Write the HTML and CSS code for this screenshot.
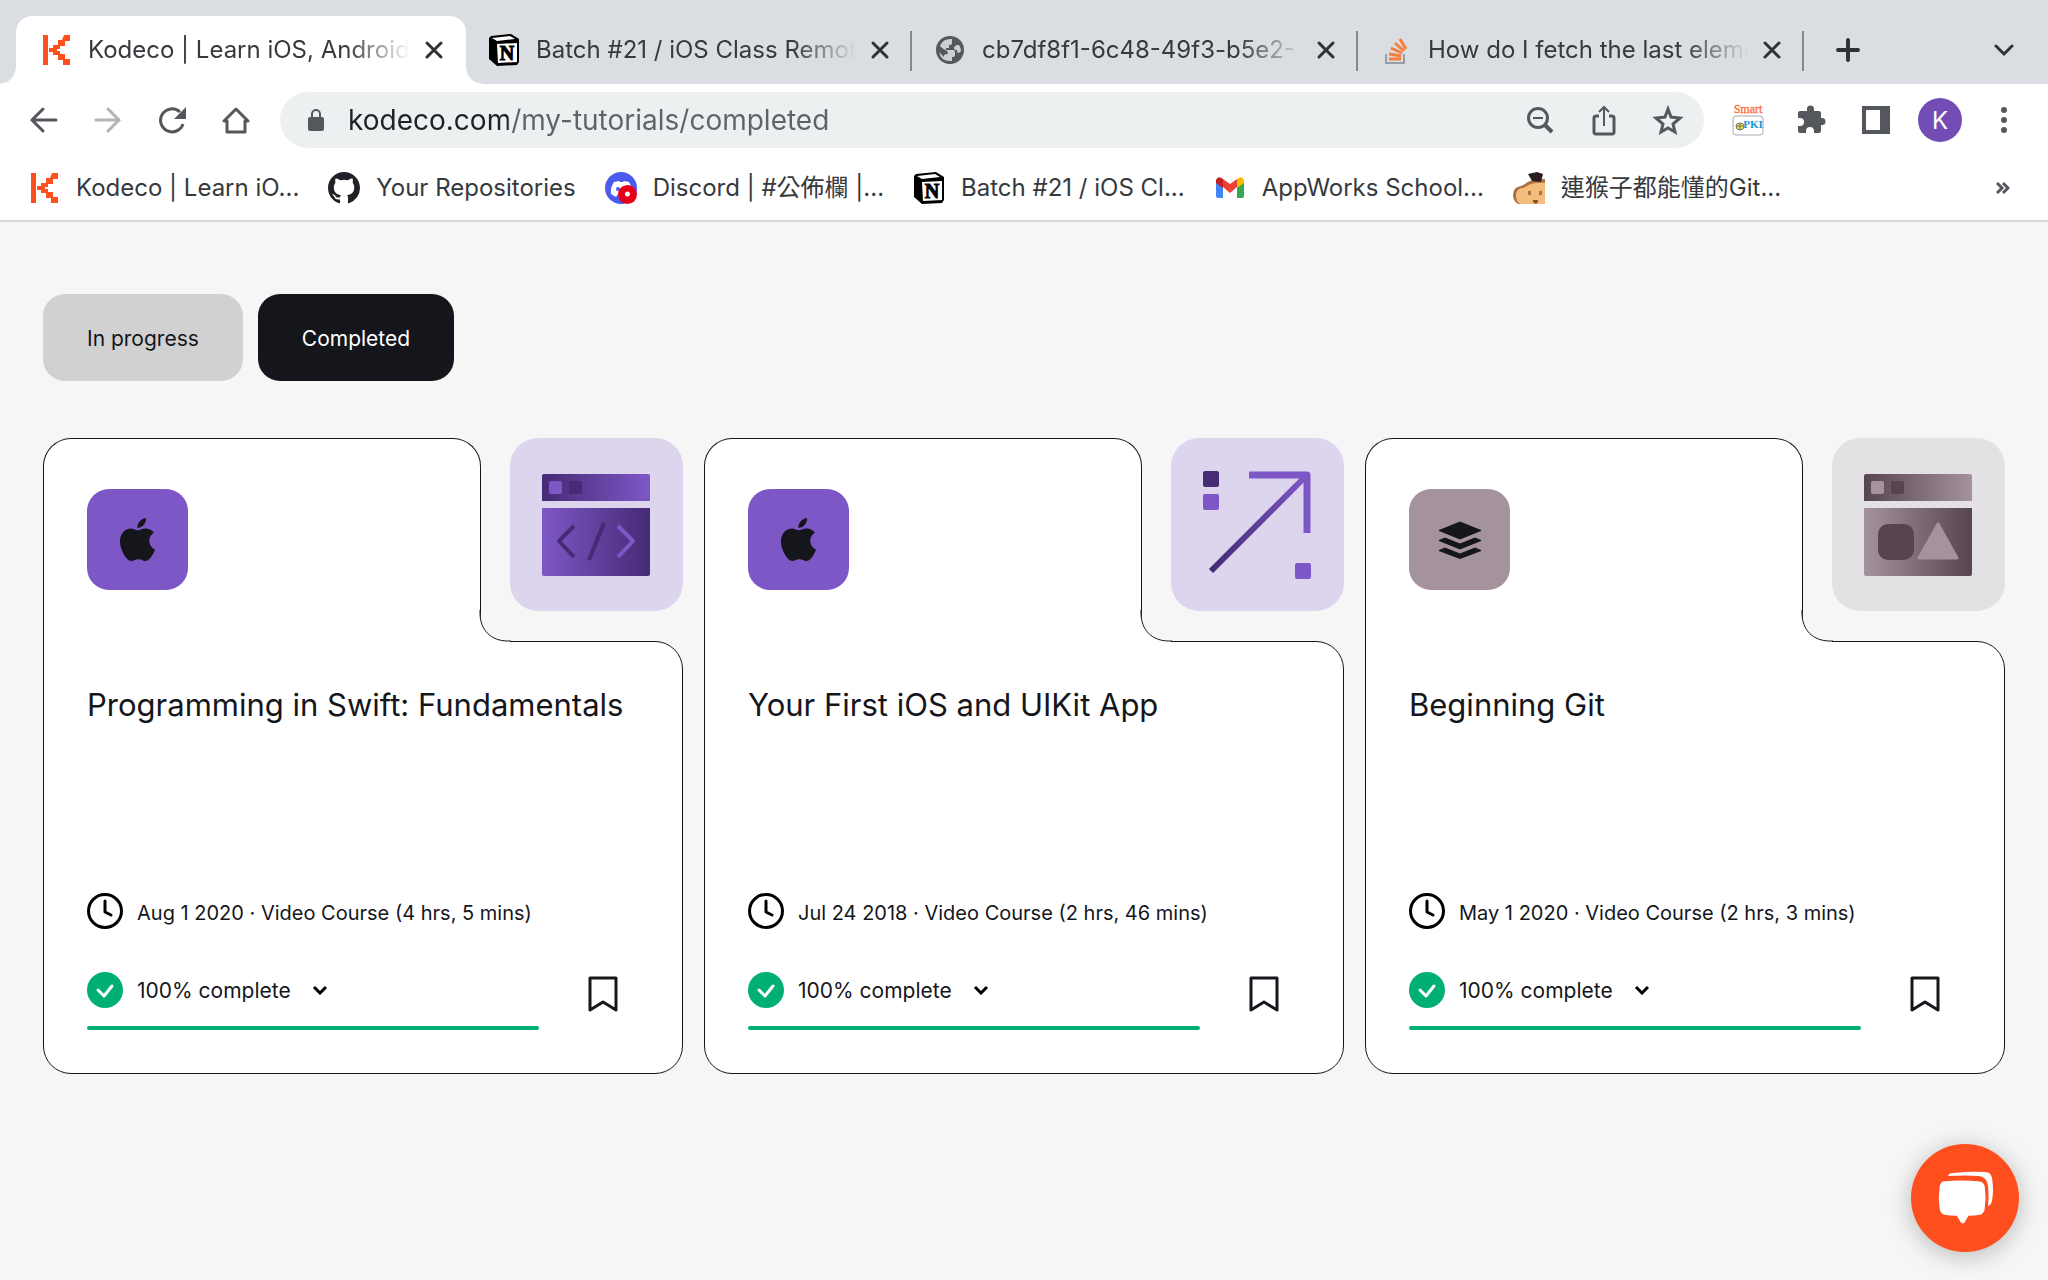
FILE: index.html
```html
<!DOCTYPE html>
<html lang="en">
<head>
<meta charset="utf-8">
<title>Kodeco | Learn iOS, Android</title>
<link rel="stylesheet" href="styles.css">
</head>
<body>
<svg class="defs" aria-hidden="true">
  <defs>
    <linearGradient id="purple-bar"><stop offset="0" stop-color="#452a75"/><stop offset="1" stop-color="#7e57c6"/></linearGradient>
    <linearGradient id="purple-pane"><stop offset="0" stop-color="#7e57c6"/><stop offset="1" stop-color="#452a75"/></linearGradient>
    <linearGradient id="mauve-bar"><stop offset="0" stop-color="#56444f"/><stop offset="1" stop-color="#a4939d"/></linearGradient>
    <linearGradient id="mauve-pane"><stop offset="0" stop-color="#a4939d"/><stop offset="1" stop-color="#56444f"/></linearGradient>
    <linearGradient id="arrow-line" gradientUnits="userSpaceOnUse" x1="40" y1="133" x2="136" y2="37"><stop offset="0" stop-color="#452a75"/><stop offset="1" stop-color="#7e57c6"/></linearGradient>
    <symbol id="kodeco" viewBox="0 0 32 32"><path fill="#ff4f1f" d="M3 1h5v30H3zM24 1h6v6h-5v5h-5v3h-3v2h3v3h5v5h5v6h-7v-5h-5v-5h-5v-3h-4v-4h4v-3h5V6h4z"/></symbol>
    <symbol id="notion" viewBox="0 0 32 32"><path fill="#000" d="M1 4 3 2 23 0l8 5v23l-2 3-20 1-8-7z"/><path fill="#fff" d="M4 4 22 2l5 3L9 7zM9 10l20-1v19L10 29z"/><text x="19" y="26" text-anchor="middle" font-family="Liberation Serif, serif" font-weight="700" font-size="20" stroke="#000" stroke-width="1">N</text></symbol>
    <symbol id="close" viewBox="0 0 20 20"><path fill="none" stroke="#2f3236" stroke-width="3" stroke-linecap="round" d="m3 3 14 14M17 3 3 17"/></symbol>
    <symbol id="apple" viewBox="0 0 24 24"><path fill="#15161b" d="M12.152 6.896c-.948 0-2.415-1.078-3.96-1.04-2.04.027-3.91 1.183-4.961 3.014-2.117 3.675-.546 9.103 1.519 12.09 1.013 1.454 2.208 3.09 3.792 3.039 1.52-.065 2.09-.987 3.935-.987 1.831 0 2.35.987 3.96.948 1.637-.026 2.676-1.48 3.676-2.948 1.156-1.688 1.636-3.325 1.662-3.415-.039-.013-3.182-1.221-3.22-4.857-.026-3.04 2.48-4.494 2.597-4.559-1.429-2.09-3.623-2.324-4.39-2.376-2-.156-3.675 1.09-4.61 1.09zM15.53 3.83c.843-1.012 1.4-2.427 1.245-3.83-1.207.052-2.662.805-3.532 1.818-.78.896-1.454 2.338-1.273 3.714 1.338.104 2.715-.688 3.559-1.701"/></symbol>
    <symbol id="clock" viewBox="0 0 36 36"><circle cx="18" cy="18" r="16.5" fill="none" stroke="#000" stroke-width="3"/><path fill="none" stroke="#000" stroke-width="3" stroke-linecap="round" stroke-linejoin="round" d="M18 8v11l6 3"/></symbol>
    <symbol id="check" viewBox="0 0 36 36"><circle cx="18" cy="18" r="18" fill="#00af76"/><path fill="none" stroke="#fff" stroke-width="3" stroke-linecap="round" stroke-linejoin="round" d="m11 18 6 6 8-10"/></symbol>
    <symbol id="caret" viewBox="0 0 16 10"><path fill="none" stroke="#000" stroke-width="3" d="m2 2 6 6 6-6"/></symbol>
    <symbol id="bookmark" viewBox="0 0 30 36"><path fill="none" stroke="#15161b" stroke-width="3" stroke-linejoin="round" d="M2 2h26v32l-13-8-13 8z"/></symbol>
    <symbol id="notch" viewBox="0 0 32 32"><path fill="#fff" d="M0 0h1c0 20 10 30 30 30v2H0z"/><path fill="none" stroke="#15161b" d="M1 0v3c0 17 11 28 28 28h3"/></symbol>
  </defs>
</svg>

<header class="browser">
  <div class="tabstrip">
    <div class="tab tab-active">
      <svg class="favicon"><use href="#kodeco"/></svg>
      <span class="tab-title">Kodeco | Learn iOS, Android</span>
      <button class="tab-close" aria-label="Close tab"><svg width="20" height="20"><use href="#close"/></svg></button>
    </div>
    <div class="tab">
      <svg class="favicon"><use href="#notion"/></svg>
      <span class="tab-title">Batch #21 / iOS Class Remot</span>
      <button class="tab-close" aria-label="Close tab"><svg width="20" height="20"><use href="#close"/></svg></button>
    </div>
    <div class="tab">
      <svg class="favicon" viewBox="0 0 32 32"><circle cx="16" cy="16" r="14" fill="#54585d"/><path fill="#dadde2" d="M18 5v4q0 2-3 2v3h-3v2h7q2 0 2 2v3q0 2-2 2h-1v4Q7 28 5 18l5 5v-2l3-1q2 0 0-3l-5-3-2-2Q9 4 18 5zM25 11q2 3 2 6l-2 2q-2 0-2-3-3 0-3-2t3-3z" opacity=".9"/></svg>
      <span class="tab-title">cb7df8f1-6c48-49f3-b5e2-</span>
      <button class="tab-close" aria-label="Close tab"><svg width="20" height="20"><use href="#close"/></svg></button>
    </div>
    <div class="tab">
      <svg class="favicon" viewBox="0 0 32 32"><path fill="none" stroke="#9a9da3" stroke-width="2" d="M6 20v9h18v-9"/><path fill="none" stroke="#f47f3d" stroke-width="3" d="M9 25h12M9 20l12 2M11 14l11 5M15 9l9 8M20 5l6 10"/></svg>
      <span class="tab-title">How do I fetch the last eleme</span>
      <button class="tab-close" aria-label="Close tab"><svg width="20" height="20"><use href="#close"/></svg></button>
    </div>
    <button class="strip-button" aria-label="New tab"><svg width="24" height="24" viewBox="0 0 24 24"><path stroke="#2f3236" stroke-width="4" stroke-linecap="round" d="M2 12h20M12 2v20"/></svg></button>
    <button class="strip-button strip-last" aria-label="Search tabs"><svg width="20" height="14" viewBox="0 0 20 14"><path fill="none" stroke="#2f3236" stroke-width="3" stroke-linecap="round" d="m2 3 8 8 8-8"/></svg></button>
  </div>

  <div class="toolbar">
    <button class="tool" aria-label="Back"><svg width="32" height="32" viewBox="0 0 32 32" fill="none" stroke="#54585d" stroke-width="3" stroke-linecap="round"><path d="M28 16H4M15 5 4 16l11 11"/></svg></button>
    <button class="tool" aria-label="Forward"><svg width="32" height="32" viewBox="0 0 32 32" fill="none" stroke="#b1b4b8" stroke-width="3" stroke-linecap="round"><path d="M4 16h23M16 5l11 11-11 11"/></svg></button>
    <button class="tool" aria-label="Reload"><svg width="32" height="32" viewBox="0 0 32 32"><path fill="none" stroke="#54585d" stroke-width="3" d="M27 20a11.500 11.500 0 1 1-3-12"/><path fill="#54585d" d="M30 3v12H18z"/></svg></button>
    <button class="tool" aria-label="Home"><svg width="32" height="32" viewBox="0 0 32 32" fill="none" stroke="#54585d" stroke-width="3"><path stroke-linejoin="round" d="M4 17h3v11h18V17h3L16 5z"/></svg></button>
    <form class="omnibox">
      <svg width="16" height="22" viewBox="0 0 16 22"><rect y="8" width="16" height="14" rx="2" fill="#54585d"/><path fill="none" stroke="#54585d" stroke-width="2" d="M4 9V5a4 4 0 0 1 8 0v4"/></svg>
      <input class="url" type="text" aria-label="Address" value="kodeco.com/my-tutorials/completed">
      <button class="tool-small" type="button" aria-label="Zoom"><svg width="32" height="32" viewBox="0 0 32 32" fill="none" stroke="#54585d" stroke-width="3"><circle cx="14" cy="14" r="9.500"/><path d="m20 20 8 8" stroke-width="4"/><path d="M9 14h10" stroke-width="2"/></svg></button>
      <button class="tool-small" type="button" aria-label="Share"><svg width="32" height="32" viewBox="0 0 32 32" fill="none" stroke="#54585d" stroke-width="3"><path d="M11 12H8q-2 0-2 2v14q0 2 2 2h16q2 0 2-2V14q0-2-2-2h-3"/><path stroke-width="2" d="M16 22V4M11 8l5-5 5 5"/></svg></button>
      <button class="tool-small" type="button" aria-label="Bookmark this page"><svg width="32" height="32" viewBox="0 0 32 32" fill="none" stroke="#54585d" stroke-width="3"><path d="m16 5 3 8 9 1-7 6 2 8-7-4-7 4 2-8-7-6 9-1z"/></svg></button>
    </form>
    <button class="tool" aria-label="Smart PKI"><svg width="32" height="32" viewBox="0 0 32 32" font-family="Liberation Serif, serif" text-anchor="middle"><text x="16" y="9" font-size="12" fill="#ff6a3a" stroke="#ff6a3a" stroke-width=".3">Smart</text><rect x="1" y="12" width="30" height="19" rx="3" fill="#fff" stroke="#aaa"/><path fill="#efdf35" stroke="#777" d="M4 22q0-3 4-3t4 3q0 4-4 4t-4-4zM8 19v7M4 22h8"/><text x="21" y="24" font-size="11" font-weight="700" fill="#1496d8">PKI</text></svg></button>
    <button class="tool" aria-label="Extensions"><svg width="32" height="32" viewBox="0 0 32 32"><path fill="#54585d" d="M4 7h7V5a3.500 3.500 0 0 1 7 0v2h5q2 0 2 2v5h1a3.500 3.500 0 0 1 0 7h-1v6q0 2-2 2h-5v-2a4 4 0 0 0-8 0v2H4q-2 0-2-2v-5h2a4 4 0 0 0 0-8H2V9q0-2 2-2z"/></svg></button>
    <button class="tool" aria-label="Side panel"><svg width="28" height="28" viewBox="0 0 28 28"><path fill="#54585d" fill-rule="evenodd" d="M0 0h28v28H0zM4 4v20h14V4z"/></svg></button>
    <button class="tool avatar" aria-label="Profile">K</button>
    <button class="tool" aria-label="Menu"><svg width="6" height="26" viewBox="0 0 6 26" fill="#54585d"><circle cx="3" cy="3" r="3"/><circle cx="3" cy="13" r="3"/><circle cx="3" cy="23" r="3"/></svg></button>
  </div>

  <nav class="bookmarks">
    <a href="#"><svg class="favicon"><use href="#kodeco"/></svg>Kodeco | Learn iO...</a>
    <a href="#"><svg class="favicon" viewBox="0 0 16 16"><path fill="#1f2328" d="M8 0C3.580 0 0 3.580 0 8c0 3.540 2.290 6.530 5.470 7.590.4.070.55-.17.55-.38 0-.19-.01-.82-.01-1.490-2.010.37-2.530-.49-2.690-.94-.09-.23-.48-.94-.82-1.130-.28-.15-.68-.52-.01-.53.63-.01 1.080.58 1.230.82.72 1.210 1.870.87 2.330.66.07-.52.28-.87.51-1.070-1.780-.2-3.640-.89-3.640-3.950 0-.87.31-1.590.82-2.150-.08-.2-.36-1.020.08-2.120 0 0 .67-.21 2.200.82.64-.18 1.320-.27 2-.27s1.360.09 2 .27c1.530-1.040 2.200-.82 2.200-.82.44 1.100.16 1.920.08 2.120.51.56.82 1.270.82 2.150 0 3.070-1.870 3.750-3.650 3.950.29.25.54.73.54 1.480 0 1.070-.01 1.930-.01 2.200 0 .21.15.46.55.38A8.010 8.010 0 0 0 16 8c0-4.420-3.580-8-8-8z"/></svg>Your Repositories</a>
    <a href="#"><svg class="favicon" viewBox="0 0 32 32"><circle cx="16" cy="16" r="16" fill="#4b5cec"/><path fill="#fff" d="m9 10 5-1 1 1h3l1-1 5 1q4 7 3 12l-5 3-2-3h-7l-2 3-5-3q-1-6 3-12z"/><circle cx="13" cy="17" r="2" fill="#4b5cec"/><circle cx="22.500" cy="22.500" r="9.500" fill="#e60019"/><circle cx="22.500" cy="22" r="2.500" fill="#fff"/></svg>Discord | #公佈欄 |...</a>
    <a href="#"><svg class="favicon"><use href="#notion"/></svg>Batch #21 / iOS Cl...</a>
    <a href="#"><svg class="favicon" viewBox="0 0 32 32"><path fill="#4285f4" d="M2 10v14q0 2 2 2h5V14z"/><path fill="#34a853" d="M23 14v12h5q2 0 2-2V10z"/><path fill="#ea4335" d="m9 7 7 5 7-5v8l-7 6-7-6z"/><path fill="#c5221f" d="M2 11V8q2-5 7-1v9z"/><path fill="#fbbc04" d="M30 11V8q-2-5-7-1v9z"/></svg>AppWorks School...</a>
    <a href="#"><svg class="favicon" viewBox="0 0 32 32"><path fill="#ad7044" d="M12 12q5-5 20-5v25H5Q0 29 0 23q0-8 8-9z"/><path fill="#f3bd7c" d="M14 14q6-4 18-3v21H7q-4-3-4-8 0-8 7-8z"/><path fill="#2a1d1c" d="m15 2 9-2 6 2-2 8-9-1z"/><path fill="#a8764a" d="M15 19h3v4h-3zM26 19h3v4h-3z"/><path fill="#8d4c2c" d="M20 28h5v2l-2 2-3-2z"/></svg>連猴子都能懂的Git...</a>
    <button class="more" aria-label="More bookmarks"><svg width="14" height="14" viewBox="0 0 14 14"><path fill="none" stroke="#54585d" stroke-width="3" d="m1 2 5 5-5 5M7 2l5 5-5 5"/></svg></button>
  </nav>
</header>

<main class="page">
  <div class="filters">
    <button class="filter">In progress</button>
    <button class="filter filter-active">Completed</button>
  </div>

  <section class="cards">
    <article class="card">
      <div class="card-top">
        <div class="card-tab">
          <div class="topic"><svg width="43" height="43"><use href="#apple"/></svg></div>
          <svg class="notch"><use href="#notch"/></svg>
        </div>
        <svg class="tile" viewBox="0 0 173 173">
          <path fill="url(#purple-bar)" d="M34 36h104q2 0 2 2v25H32V38q0-2 2-2z"/>
          <path fill="url(#purple-pane)" d="M32 70h108v66q0 2-2 2H34q-2 0-2-2z"/>
          <rect x="39" y="43" width="13" height="13" rx="2" fill="#7e57c6"/><rect x="59" y="43" width="13" height="13" rx="2" fill="#452a75"/>
          <g fill="none" stroke="#452a75" stroke-width="4" stroke-linejoin="round"><path d="M64 88 49 103l15 16M94 85 79 122"/><path stroke="#7e57c6" d="m108 88 15 15-15 16"/></g>
        </svg>
      </div>
      <div class="card-body">
        <h2 class="card-title">Programming in Swift: Fundamentals</h2>
        <p class="meta"><svg width="36" height="36"><use href="#clock"/></svg><span>Aug 1 2020 · Video Course (4 hrs, 5 mins)</span></p>
        <div class="card-footer">
          <div class="status">
            <button class="status-button"><svg width="36" height="36"><use href="#check"/></svg>100% complete<svg class="caret"><use href="#caret"/></svg></button>
            <progress class="bar" value="100" max="100" aria-label="Progress"></progress>
          </div>
          <button class="save" aria-label="Bookmark"><svg width="30" height="36"><use href="#bookmark"/></svg></button>
        </div>
      </div>
    </article>

    <article class="card">
      <div class="card-top">
        <div class="card-tab">
          <div class="topic"><svg width="43" height="43"><use href="#apple"/></svg></div>
          <svg class="notch"><use href="#notch"/></svg>
        </div>
        <svg class="tile" viewBox="0 0 173 173">
          <rect x="32" y="33" width="16" height="16" rx="2" fill="#452a75"/><rect x="32" y="56" width="16" height="16" rx="2" fill="#7e57c6"/><rect x="124" y="125" width="16" height="16" rx="2" fill="#7e57c6"/>
          <g fill="none" stroke-width="7"><path stroke="#7e57c6" stroke-linejoin="round" d="M78 37h58v58"/><path stroke="url(#arrow-line)" stroke-width="6" d="m40 133 96-96"/></g>
        </svg>
      </div>
      <div class="card-body">
        <h2 class="card-title">Your First iOS and UIKit App</h2>
        <p class="meta"><svg width="36" height="36"><use href="#clock"/></svg><span>Jul 24 2018 · Video Course (2 hrs, 46 mins)</span></p>
        <div class="card-footer">
          <div class="status">
            <button class="status-button"><svg width="36" height="36"><use href="#check"/></svg>100% complete<svg class="caret"><use href="#caret"/></svg></button>
            <progress class="bar" value="100" max="100" aria-label="Progress"></progress>
          </div>
          <button class="save" aria-label="Bookmark"><svg width="30" height="36"><use href="#bookmark"/></svg></button>
        </div>
      </div>
    </article>

    <article class="card card-mauve">
      <div class="card-top">
        <div class="card-tab">
          <div class="topic"><svg width="44" height="38" viewBox="0 0 44 38" fill="#15161b" stroke="#15161b" stroke-width="1" stroke-linejoin="round"><path d="M22 1 43 9.500 22 18 1 9.500zM1 19.500 7 17l15 6 15-6 6 2.500L22 28zM1 29.500 7 27l15 6 15-6 6 2.500L22 37.500z"/></svg></div>
          <svg class="notch"><use href="#notch"/></svg>
        </div>
        <svg class="tile" viewBox="0 0 173 173">
          <path fill="url(#mauve-bar)" d="M34 36h104q2 0 2 2v25H32V38q0-2 2-2z"/>
          <path fill="url(#mauve-pane)" d="M32 70h108v66q0 2-2 2H34q-2 0-2-2z"/>
          <rect x="39" y="43" width="13" height="13" rx="2" fill="#a4939d"/><rect x="59" y="43" width="13" height="13" rx="2" fill="#56444f"/>
          <rect x="46" y="86" width="36" height="36" rx="10" fill="#56444f"/><path fill="#a4939d" stroke="#a4939d" stroke-width="3" stroke-linejoin="round" d="m106 86 19 34H87z"/>
        </svg>
      </div>
      <div class="card-body">
        <h2 class="card-title">Beginning Git</h2>
        <p class="meta"><svg width="36" height="36"><use href="#clock"/></svg><span>May 1 2020 · Video Course (2 hrs, 3 mins)</span></p>
        <div class="card-footer">
          <div class="status">
            <button class="status-button"><svg width="36" height="36"><use href="#check"/></svg>100% complete<svg class="caret"><use href="#caret"/></svg></button>
            <progress class="bar" value="100" max="100" aria-label="Progress"></progress>
          </div>
          <button class="save" aria-label="Bookmark"><svg width="30" height="36"><use href="#bookmark"/></svg></button>
        </div>
      </div>
    </article>
  </section>
</main>

<button class="chat" aria-label="Open chat">
  <svg width="56" height="54" viewBox="0 0 56 54" fill="#fff"><path d="M6 9q21-2 42 0 4 1 5 5 2 12 0 24-1 5-5 6-6 1-13 1l-5 8h-3l-5-8q-8 0-14-1-4-1-5-6-2-12 0-24 1-4 3-5z" transform="translate(0 2) scale(.9 .95)"/><path d="M11 5q1-3 5-3 18-2 32-1 6 0 7 6 2 12 0 23-1 4-4 5 1-12 0-20-1-9-9-10-14-1-31 0z"/></svg>
</button>
</body>
</html>
```
FILE: styles.css
```css
* { box-sizing: border-box; }

body {
  margin: 0;
  min-height: 100vh;
  background: #f6f6f6;
  color: #15161b;
  font-family: Inter, "Noto Sans CJK TC", sans-serif;
}

button {
  display: flex;
  align-items: center;
  justify-content: center;
  padding: 0;
  border: 0;
  background: none;
  color: inherit;
  font: inherit;
}

svg { display: block; flex: none; }

.defs { position: absolute; width: 0; height: 0; }

.favicon { width: 32px; height: 32px; }

/* Browser chrome */
.browser {
  background: #fff;
  border-bottom: 2px solid #d6d6d6;
  color: #36393d;
  font-size: 24px;
}

.tabstrip {
  display: flex;
  align-items: stretch;
  height: 84px;
  padding: 16px 16px 0;
  background: #dadde2;
}

.tab {
  position: relative;
  display: flex;
  align-items: center;
  flex: 0 1 446px;
  min-width: 0;
  padding: 0 22px;
}

.tab:not(.tab-active)::after {
  content: "";
  position: absolute;
  top: 15px;
  right: 0;
  width: 2px;
  height: 40px;
  background: #85888d;
}

.tab-active {
  flex-basis: 450px;
  padding-left: 24px;
  border-radius: 16px 16px 0 0;
  background: #fff;
}

.tab-active::before,
.tab-active::after {
  content: "";
  position: absolute;
  bottom: 0;
  width: 16px;
  height: 16px;
}

.tab-active::before {
  right: 100%;
  background: radial-gradient(circle at 0 0, #dadde2 15px, #fff 16px);
}

.tab-active::after {
  left: 100%;
  background: radial-gradient(circle at 100% 0, #dadde2 15px, #fff 16px);
}

.tab-title {
  flex: 1;
  min-width: 0;
  margin: 0 14px 0 16px;
  overflow: hidden;
  line-height: 32px;
  white-space: nowrap;
  -webkit-mask-image: linear-gradient(90deg, #000 calc(100% - 64px), transparent);
  mask-image: linear-gradient(90deg, #000 calc(100% - 64px), transparent);
}

.tab-close { width: 20px; }

.strip-button { width: 44px; margin-left: 22px; }

.strip-last { width: 24px; margin-left: auto; margin-right: 16px; }

.toolbar {
  display: flex;
  align-items: center;
  gap: 20px;
  padding: 8px 22px;
}

.tool { width: 44px; height: 44px; }

.omnibox {
  display: flex;
  align-items: center;
  flex: 1;
  gap: 20px;
  height: 56px;
  margin: 0 2px;
  padding: 0 14px 0 28px;
  border-radius: 28px;
  background: #ecf0f1;
}

/* The host is dark and the path is grey, split where ".com" ends. */
.url {
  flex: 1;
  min-width: 0;
  padding: 0 4px;
  border: 0;
  outline: 0;
  background: linear-gradient(90deg, #202124 164px, #5f6368 164px);
  -webkit-background-clip: text;
  background-clip: text;
  color: transparent;
  font: inherit;
  font-size: 28px;
  line-height: 40px;
}

.tool-small { width: 44px; height: 44px; }

.avatar {
  border-radius: 50%;
  background: #734db5;
  color: #fff;
}

.bookmarks {
  display: flex;
  align-items: center;
  gap: 29px;
  height: 64px;
  padding: 0 38px 0 28px;
}

.bookmarks a {
  display: flex;
  align-items: center;
  gap: 16px;
  height: 32px;
  color: inherit;
  line-height: 32px;
  text-decoration: none;
  white-space: nowrap;
}

.more { margin-left: auto; }

/* Tutorials page */
.page { padding: 72px 43px 48px; }

.filters { display: flex; gap: 15px; margin-bottom: 57px; }

.filter {
  height: 87px;
  padding: 2px 44px 0;
  border-radius: 22px;
  background: #d1d1d1;
  font-size: 21px;
}

.filter-active { background: #15161b; color: #fff; }

.cards {
  display: grid;
  grid-template-columns: repeat(3, minmax(0, 1fr));
  gap: 21px;
}

.card { display: flex; flex-direction: column; }

.card-top { display: flex; gap: 29px; height: 203px; }

.card-tab {
  position: relative;
  flex: 1;
  height: 204px;
  padding: 50px 43px 0;
  border: 1px solid #15161b;
  border-bottom: 0;
  border-radius: 28px 28px 0 0;
  background: #fff;
}

.notch {
  position: absolute;
  right: -31px;
  bottom: 0;
  width: 32px;
  height: 32px;
}

.topic {
  display: flex;
  align-items: center;
  justify-content: center;
  width: 101px;
  height: 101px;
  border-radius: 22px;
  background: #7e57c6;
}

.tile {
  width: 173px;
  height: 173px;
  border-radius: 28px;
  background: #ddd5ed;
}

.card-mauve .topic { background: #a4939d; }

.card-mauve .tile { background: #e4e1e5; }

.card-body {
  display: flex;
  flex: 1;
  flex-direction: column;
  min-height: 433px;
  padding: 43px;
  border: 1px solid #15161b;
  border-radius: 0 28px 28px 28px;
  background: #fff;
}

.card-title {
  margin: 0 0 auto;
  font-size: 31px;
  font-weight: 400;
  line-height: 40px;
}

.meta {
  display: flex;
  align-items: center;
  gap: 14px;
  margin: 0 0 43px;
  font-size: 20px;
}

.meta span { padding-top: 3px; }

.card-footer {
  display: grid;
  grid-template-columns: minmax(0, 1fr) 72px;
  gap: 28px;
}

.status-button { gap: 14px; font-size: 21px; }

.caret { width: 16px; height: 10px; margin-left: 7px; }

.bar {
  display: block;
  width: 100%;
  height: 4px;
  margin-top: 18px;
  border: 0;
  border-radius: 2px;
  overflow: hidden;
  appearance: none;
  -webkit-appearance: none;
}

.bar::-webkit-progress-bar { background: #d1d1d1; }

.bar::-webkit-progress-value { background: #00af76; }

.save { height: 44px; align-self: start; }

.chat {
  position: fixed;
  right: 29px;
  bottom: 28px;
  width: 108px;
  height: 108px;
  border-radius: 50%;
  background: #ff4f1f;
  box-shadow: 0 4px 24px rgba(0, 0, 0, .25);
}
```
